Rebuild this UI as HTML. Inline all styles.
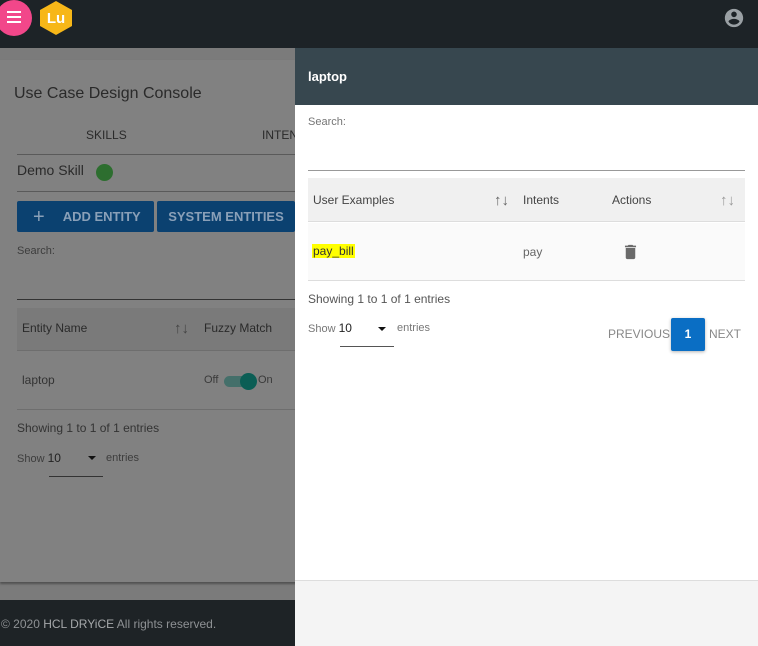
<!DOCTYPE html>
<html><head><meta charset="utf-8"><style>
*{box-sizing:border-box;margin:0;padding:0}
body{width:758px;height:646px;overflow:hidden;font-family:"Liberation Sans",Arial,sans-serif;background:#7b7b7b;position:relative}
.abs{position:absolute}
.hdr{left:0;top:0;width:758px;height:48px;background:#1d2327}
.card{left:0;top:60px;width:300px;height:522px;background:#818181;box-shadow:0 2px 2px rgba(0,0,0,.35)}
.ft{left:0;top:600px;width:300px;height:46px;background:#1e2326;color:#8e9194;font-size:12px;padding:17px 0 0 1px}
.t{color:#2a2a2a}
.btn{background:#0b4170;color:#8aa0b8;font-size:13px;font-weight:bold;border-radius:2px;height:31px;line-height:31px;text-align:center}
.line{height:1px;background:#5a5a5a}
.panel{left:295px;top:48px;width:463px;height:598px;background:#fff}
.ph{left:0;top:0;width:463px;height:57px;background:#37474f;color:#fff;font-size:13px;font-weight:bold;padding:21px 0 0 13px}
.g{color:#757575}
</style></head><body>
<div class="abs hdr"></div>
<div class="abs" style="left:-4px;top:0;width:36px;height:36px;border-radius:50%;background:#f2478a"></div>
<div class="abs" style="left:7px;top:11px;width:14px;height:2px;background:#fff;box-shadow:0 5px 0 #fff,0 10px 0 #fff"></div>
<svg class="abs" style="left:38px;top:0" width="36" height="36" viewBox="0 0 36 36"><polygon points="18,1 34,10 34,26 18,35 2,26 2,10" fill="#f7b718"/><text x="18" y="23" text-anchor="middle" font-family="Liberation Sans" font-weight="bold" font-size="15" fill="#fff">Lu</text></svg>
<svg class="abs" style="left:723px;top:7px" width="22" height="22" viewBox="0 0 24 24"><path fill="#9aa0a4" d="M12 2C6.48 2 2 6.48 2 12s4.48 10 10 10 10-4.48 10-10S17.52 2 12 2zm0 3c1.660 0 3 1.34 3 3s-1.34 3-3 3-3-1.34-3-3 1.34-3 3-3zm0 14.2c-2.5 0-4.71-1.28-6-3.22.03-1.990 4-3.08 6-3.08 1.990 0 5.970 1.09 6 3.08-1.29 1.94-3.5 3.22-6 3.22z"/></svg>

<div class="abs card"></div>
<div class="abs t" style="left:14px;top:85px;font-size:16px">Use Case Design Console</div>
<div class="abs t" style="left:86px;top:128px;font-size:12px">SKILLS</div>
<div class="abs t" style="left:262px;top:128px;font-size:12px">INTEN</div>
<div class="abs line" style="left:17px;top:154px;width:280px"></div>
<div class="abs t" style="left:17px;top:162px;font-size:14px">Demo Skill</div>
<div class="abs" style="left:96px;top:164px;width:17px;height:17px;border-radius:50%;background:#2d6e2f"></div>
<div class="abs line" style="left:17px;top:191px;width:280px"></div>
<div class="abs btn" style="left:17px;top:201px;width:137px;text-align:left;padding-left:16px"><span style="font-size:20px;font-weight:normal;vertical-align:-2px;margin-right:18px">+</span>ADD ENTITY</div>
<div class="abs btn" style="left:157px;top:201px;width:138px">SYSTEM ENTITIES</div>
<div class="abs" style="left:17px;top:245px;font-size:11px;color:#3d3d3d">Search:</div>
<div class="abs" style="left:17px;top:299px;width:280px;height:1px;background:#333"></div>
<div class="abs" style="left:17px;top:308px;width:280px;height:43px;background:#7a7a7a;border-bottom:1px solid #6e6e6e"></div>
<div class="abs t" style="left:22px;top:321px;font-size:12px">Entity Name</div>
<div class="abs" style="left:174px;top:320px;font-size:15px;color:#444">↑↓</div>
<div class="abs t" style="left:204px;top:321px;font-size:12px">Fuzzy Match</div>
<div class="abs" style="left:17px;top:352px;width:280px;height:58px;border-bottom:1px solid #6e6e6e"></div>
<div class="abs" style="left:22px;top:373px;font-size:12px;color:#333">laptop</div>
<div class="abs" style="left:204px;top:374px;font-size:11px;color:#3a3a3a">Off</div>
<div class="abs" style="left:224px;top:376px;width:32px;height:11px;border-radius:6px;background:#446f6a"></div>
<div class="abs" style="left:240px;top:373px;width:17px;height:17px;border-radius:50%;background:#0b5e55"></div>
<div class="abs" style="left:258px;top:374px;font-size:11px;color:#3a3a3a">On</div>
<div class="abs" style="left:17px;top:421px;font-size:12px;color:#333">Showing 1 to 1 of 1 entries</div>
<div class="abs" style="left:17px;top:451px;font-size:11px;color:#3d3d3d">Show <span style="color:#222;font-size:12px">10</span></div>
<div class="abs" style="left:88px;top:456px;width:0;height:0;border-left:4px solid transparent;border-right:4px solid transparent;border-top:4px solid #111"></div>
<div class="abs" style="left:106px;top:452px;font-size:11px;color:#3d3d3d">entries</div>
<div class="abs" style="left:49px;top:476px;width:54px;height:1px;background:#333"></div>
<div class="abs ft">© 2020 <b style="font-weight:normal;color:#a5a8aa">HCL DRYiCE</b> All rights reserved.</div>

<div class="abs panel">
<div class="abs ph">laptop</div>
<div class="abs g" style="left:13px;top:68px;font-size:11px">Search:</div>
<div class="abs" style="left:13px;top:122px;width:437px;height:1px;background:#999"></div>
<div class="abs" style="left:13px;top:130px;width:437px;height:44px;background:#f0f0f0;border-bottom:1px solid #ddd"></div>
<div class="abs" style="left:18px;top:145px;font-size:12px;color:#444">User Examples</div>
<div class="abs" style="left:199px;top:144px;font-size:15px;color:#666">↑↓</div>
<div class="abs" style="left:228px;top:145px;font-size:12px;color:#444">Intents</div>
<div class="abs" style="left:317px;top:145px;font-size:12px;color:#444">Actions</div>
<div class="abs" style="left:425px;top:144px;font-size:15px;color:#999">↑↓</div>
<div class="abs" style="left:13px;top:175px;width:437px;height:58px;background:#fafafa;border-bottom:1px solid #ddd"></div>
<div class="abs" style="left:17px;top:196px;font-size:12px;color:#333;background:#ffff00;padding:0 1px">pay_bill</div>
<div class="abs" style="left:228px;top:197px;font-size:12px;color:#666">pay</div>
<svg class="abs" style="left:326px;top:194px" width="19" height="20" viewBox="0 0 24 24"><path fill="#6a6a6a" d="M6 19c0 1.1.9 2 2 2h8c1.1 0 2-.9 2-2V7H6v12zM19 4h-3.5l-1-1h-5l-1 1H5v2h14V4z"/></svg>
<div class="abs" style="left:13px;top:244px;font-size:12px;color:#555">Showing 1 to 1 of 1 entries</div>
<div class="abs" style="left:13px;top:273px;font-size:11px;color:#777">Show <span style="color:#222;font-size:12px">10</span></div>
<div class="abs" style="left:83px;top:279px;width:0;height:0;border-left:4px solid transparent;border-right:4px solid transparent;border-top:4px solid #111"></div>
<div class="abs" style="left:102px;top:274px;font-size:11px;color:#777">entries</div>
<div class="abs" style="left:45px;top:298px;width:54px;height:1px;background:#555"></div>
<div class="abs" style="left:313px;top:279px;font-size:12px;color:#888">PREVIOUS</div>
<div class="abs" style="left:376px;top:270px;width:34px;height:33px;background:#0a6ec4;color:#fff;font-size:12px;font-weight:bold;text-align:center;line-height:33px;border-radius:2px;box-shadow:0 1px 3px rgba(0,0,0,.3)">1</div>
<div class="abs" style="left:414px;top:279px;font-size:12px;color:#888">NEXT</div>
<div class="abs" style="left:0;top:532px;width:463px;height:66px;background:#f4f4f4;border-top:1px solid #ddd"></div>
</div>
</body></html>
